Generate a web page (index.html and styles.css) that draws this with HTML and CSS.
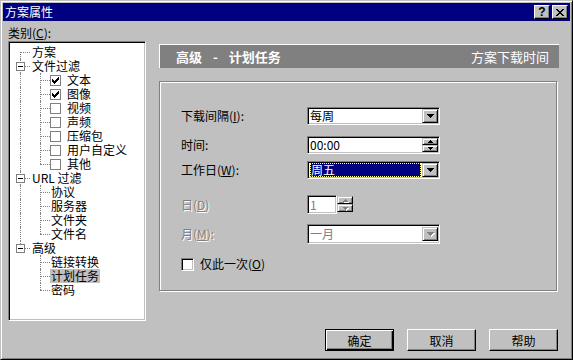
FILE: index.html
```html
<!DOCTYPE html>
<html lang="zh-CN">
<head>
    <meta charset="UTF-8">
    <title>方案属性</title>
    <link rel="stylesheet" href="styles.css">
</head>
<body>
    <div class="window">
        <div class="titlebar">
            <span class="title">方案属性</span>
            <div class="cap-btns">
                <div class="cap-btn help">?</div>
                <div class="cap-btn">
                    <svg width="8" height="7" viewBox="0 0 8 7"><path d="M0 0h2v1h-2z M6 0h2v1h-2z M1 1h2v1h-2z M5 1h2v1h-2z M2 2h4v1h-4z M3 3h2v1h-2z M2 4h4v1h-4z M1 5h2v1h-2z M5 5h2v1h-2z M0 6h2v1h-2z M6 6h2v1h-2z"/></svg>
                </div>
            </div>
        </div>

        <div class="content">
            <div class="main">
                <div class="left">
                    <div class="cat-label">类别(<u>C</u>):</div>
                    <div class="tree">
                        <div class="node"><i class="conn first"></i><span class="label">方案</span></div>
                        <div class="node"><i class="conn"><b class="exp"></b></i><span class="label">文件过滤</span></div>
                        <div class="node"><i class="guide"></i><i class="conn"></i><b class="chk on"><svg width="7" height="7" viewBox="0 0 7 7"><path d="M6 0h1v1h-1z M5 1h2v1h-2z M0 2h1v1h-1z M4 2h3v1h-3z M0 3h2v1h-2z M3 3h3v1h-3z M0 4h5v1h-5z M1 5h3v1h-3z M2 6h1v1h-1z"/></svg></b><span class="label">文本</span></div>
                        <div class="node"><i class="guide"></i><i class="conn"></i><b class="chk on"><svg width="7" height="7" viewBox="0 0 7 7"><path d="M6 0h1v1h-1z M5 1h2v1h-2z M0 2h1v1h-1z M4 2h3v1h-3z M0 3h2v1h-2z M3 3h3v1h-3z M0 4h5v1h-5z M1 5h3v1h-3z M2 6h1v1h-1z"/></svg></b><span class="label">图像</span></div>
                        <div class="node"><i class="guide"></i><i class="conn"></i><b class="chk"></b><span class="label">视频</span></div>
                        <div class="node"><i class="guide"></i><i class="conn"></i><b class="chk"></b><span class="label">声频</span></div>
                        <div class="node"><i class="guide"></i><i class="conn"></i><b class="chk"></b><span class="label">压缩包</span></div>
                        <div class="node"><i class="guide"></i><i class="conn"></i><b class="chk"></b><span class="label">用户自定义</span></div>
                        <div class="node"><i class="guide"></i><i class="conn last"></i><b class="chk"></b><span class="label">其他</span></div>
                        <div class="node"><i class="conn"><b class="exp"></b></i><span class="label">URL 过滤</span></div>
                        <div class="node"><i class="guide"></i><i class="conn"></i><span class="label sub">协议</span></div>
                        <div class="node"><i class="guide"></i><i class="conn"></i><span class="label sub">服务器</span></div>
                        <div class="node"><i class="guide"></i><i class="conn"></i><span class="label sub">文件夹</span></div>
                        <div class="node"><i class="guide"></i><i class="conn last"></i><span class="label sub">文件名</span></div>
                        <div class="node"><i class="conn last"><b class="exp"></b></i><span class="label">高级</span></div>
                        <div class="node"><i class="blank"></i><i class="conn"></i><span class="label sub">链接转换</span></div>
                        <div class="node"><i class="blank"></i><i class="conn"></i><span class="label sub selected">计划任务</span></div>
                        <div class="node"><i class="blank"></i><i class="conn last"></i><span class="label sub">密码</span></div>
                    </div>
                </div>

                <div class="right">
                    <div class="header">
                        <b>高级<span class="dash">-</span>计划任务</b>
                        <span>方案下载时间</span>
                    </div>

                    <div class="group">
                        <div class="row r1">
                            <span class="lbl">下载间隔(<u>I</u>):</span>
                            <div class="field combo">
                                <span class="val">每周</span>
                                <span class="drop"><svg width="7" height="4" viewBox="0 0 7 4"><path d="M0 0h7v1h-1v1h-1v1h-1v1h-1v-1h-1v-1h-1v-1h-1z"/></svg></span>
                            </div>
                        </div>
                        <div class="row r2">
                            <span class="lbl">时间:</span>
                            <div class="field combo">
                                <span class="val">00:00</span>
                                <span class="updown">
                                    <span class="ud"><svg width="5" height="3" viewBox="0 0 5 3"><path d="M2 0h1v1h1v1h1v1h-5v-1h1v-1h1z"/></svg></span>
                                    <span class="ud"><svg width="5" height="3" viewBox="0 0 5 3"><path d="M0 0h5v1h-1v1h-1v1h-1v-1h-1v-1h-1z"/></svg></span>
                                </span>
                            </div>
                        </div>
                        <div class="row r3">
                            <span class="lbl">工作日(<u>W</u>):</span>
                            <div class="field combo">
                                <span class="val sel">周五</span>
                                <span class="drop"><svg width="7" height="4" viewBox="0 0 7 4"><path d="M0 0h7v1h-1v1h-1v1h-1v1h-1v-1h-1v-1h-1v-1h-1z"/></svg></span>
                            </div>
                        </div>
                        <div class="row r4 disabled">
                            <span class="lbl">日(<u>D</u>)</span>
                            <div class="field small"><span class="val">1</span></div>
                            <span class="updown outside">
                                <span class="ud"><svg width="5" height="3" viewBox="0 0 5 3"><path d="M2 0h1v1h1v1h1v1h-5v-1h1v-1h1z"/></svg></span>
                                <span class="ud"><svg width="5" height="3" viewBox="0 0 5 3"><path d="M0 0h5v1h-1v1h-1v1h-1v-1h-1v-1h-1z"/></svg></span>
                            </span>
                        </div>
                        <div class="row r5 disabled">
                            <span class="lbl">月(<u>M</u>):</span>
                            <div class="field combo">
                                <span class="val">一月</span>
                                <span class="drop"><svg width="7" height="4" viewBox="0 0 7 4"><path d="M0 0h7v1h-1v1h-1v1h-1v1h-1v-1h-1v-1h-1v-1h-1z"/></svg></span>
                            </div>
                        </div>
                        <div class="row r6">
                            <span class="box"></span>
                            <span class="check-lbl">仅此一次(<u>O</u>)</span>
                        </div>
                    </div>
                </div>
            </div>

            <div class="footer">
                <div class="btn default">确定</div>
                <div class="btn">取消</div>
                <div class="btn">帮助</div>
            </div>
        </div>
    </div>
</body>
</html>
```

FILE: styles.css
```css
* {
    box-sizing: border-box;
}

body {
    margin: 0;
    background-color: #c0c0c0;
    font-family: "Noto Sans CJK SC", "Liberation Sans", sans-serif;
    font-size: 12px;
    color: #000;
}

u {
    text-decoration: underline;
}

.window {
    width: 573px;
    height: 360px;
    padding: 2px;
    border: 1px solid;
    border-color: #c0c0c0 #000 #000 #c0c0c0;
    box-shadow: inset 1px 1px #fff, inset -1px -1px #808080;
    background-color: #c0c0c0;
    display: flex;
    flex-direction: column;
}

/* title bar */
.titlebar {
    height: 18px;
    background-color: #000080;
    color: #fff;
    display: flex;
    align-items: center;
    justify-content: space-between;
    padding: 0 2px 0 2px;
}

.title {
    line-height: 18px;
}

.cap-btns {
    display: flex;
    gap: 2px;
}

.cap-btn {
    width: 16px;
    height: 14px;
    background-color: #c0c0c0;
    border: 1px solid;
    border-color: #fff #000 #000 #fff;
    box-shadow: inset -1px -1px #808080;
    display: flex;
    align-items: center;
    justify-content: center;
    color: #000;
}

.cap-btn.help {
    font-family: "Liberation Sans", sans-serif;
    font-weight: bold;
    font-size: 12px;
    line-height: 12px;
}

/* body */
.content {
    flex: 1;
    padding-left: 5px;
    display: flex;
    flex-direction: column;
}

.main {
    display: flex;
    gap: 13px;
}

.left {
    width: 138px;
}

.cat-label {
    height: 20px;
    padding-top: 4px;
    line-height: 15px;
}

.tree {
    height: 280px;
    padding: 3px 1px;
    border: 1px solid;
    border-color: #808080 #fff #fff #808080;
    box-shadow: inset 1px 1px #000, inset -1px -1px #c0c0c0;
    background-color: #fff;
}

.node {
    height: 14px;
    display: flex;
    align-items: center;
}

.conn, .guide, .blank {
    position: relative;
    flex: none;
    width: 20px;
    height: 14px;
}

.conn::before, .guide::before {
    content: "";
    position: absolute;
    left: 10px;
    top: 0;
    bottom: 0;
    border-left: 1px dotted #808080;
}

.conn.first::before {
    top: 7px;
}

.conn.last::before {
    bottom: 7px;
}

.conn::after {
    content: "";
    position: absolute;
    left: 10px;
    top: 7px;
    width: 10px;
    border-top: 1px dotted #808080;
}

.exp {
    position: absolute;
    z-index: 1;
    left: 6px;
    top: 3px;
    width: 9px;
    height: 9px;
    border: 1px solid #808080;
    background-color: #fff;
}

.exp::before {
    content: "";
    position: absolute;
    left: 1px;
    top: 3px;
    width: 5px;
    height: 1px;
    background-color: #000;
}

.chk {
    flex: none;
    width: 11px;
    height: 11px;
    border: 1px solid #808080;
    background-color: #fff;
    display: flex;
    align-items: center;
    justify-content: center;
}

.label {
    display: block;
    height: 14px;
    line-height: 14px;
    padding: 0 1px;
    margin-left: 1px;
    white-space: nowrap;
}

.chk + .label {
    margin-left: 5px;
}

.label.sub {
    margin-left: 0;
}

.label.selected {
    background-color: #c0c0c0;
}

/* right side */
.right {
    flex: 1;
}

.header {
    margin-top: 23px;
    width: 400px;
    height: 24px;
    background-color: #808080;
    border-top: 1px solid #fff;
    border-left: 1px solid #fff;
    color: #fff;
    font-size: 13px;
    display: flex;
    align-items: center;
    justify-content: space-between;
    padding: 0 10px 0 16px;
}

.dash {
    margin: 0 11px;
}

.group {
    margin-top: 13px;
    width: 398px;
    height: 210px;
    border: 1px solid #808080;
    box-shadow: inset 1px 1px #fff, 1px 1px #fff;
    padding: 25px 0 0 21px;
}

.row {
    display: flex;
    align-items: center;
}

.r2 { margin-top: 11px; }
.r3 { margin-top: 7px; }
.r4 { margin-top: 16px; }
.r5 { margin-top: 10px; }
.r6 { margin-top: 12px; }

.lbl {
    width: 126px;
    line-height: 16px;
}

.field {
    height: 18px;
    padding: 1px;
    border: 1px solid;
    border-color: #808080 #fff #fff #808080;
    box-shadow: inset 1px 1px #000, inset -1px -1px #c0c0c0;
    background-color: #fff;
    display: flex;
    align-items: center;
}

.combo {
    width: 133px;
}

.r4 .field {
    height: 19px;
}

.r5 .field {
    height: 20px;
}

.small {
    width: 30px;
}

.val {
    flex: 1;
    height: 14px;
    line-height: 14px;
    padding-left: 1px;
}

.val.sel {
    margin: 0 1px;
    background-color: #000080;
    color: #fff;
    outline: 1px dotted #ffff80;
    outline-offset: -1px;
}

.drop, .ud {
    background-color: #c0c0c0;
    border: 1px solid;
    border-color: #c0c0c0 #000 #000 #c0c0c0;
    box-shadow: inset 1px 1px #fff, inset -1px -1px #808080;
    display: flex;
    align-items: center;
    justify-content: center;
}

.drop {
    width: 16px;
    height: 14px;
}

.updown {
    display: flex;
    flex-direction: column;
    width: 16px;
}

.ud {
    height: 7px;
}

.updown.outside {
    height: 19px;
    padding: 1px 0;
}

.updown.outside .ud {
    height: 8px;
}

.disabled .lbl,
.disabled .val {
    color: #808080;
    text-shadow: 1px 1px #fff;
}

.disabled svg {
    fill: #808080;
    filter: drop-shadow(1px 1px 0 #fff);
}

.box {
    width: 13px;
    height: 13px;
    border: 1px solid;
    border-color: #808080 #fff #fff #808080;
    box-shadow: inset 1px 1px #000, inset -1px -1px #c0c0c0;
    background-color: #fff;
}

.check-lbl {
    margin-left: 6px;
    line-height: 16px;
}

/* buttons */
.footer {
    margin-top: 8px;
    padding-right: 12px;
    display: flex;
    justify-content: flex-end;
    gap: 13px;
}

.btn {
    width: 69px;
    height: 22px;
    border: 1px solid;
    border-color: #fff #000 #000 #fff;
    box-shadow: inset -1px -1px #808080;
    display: flex;
    align-items: center;
    justify-content: center;
}

.btn.default {
    border-color: #000;
    box-shadow: inset 1px 1px #fff, inset -1px -1px #000, inset -2px -2px #808080;
}
```
